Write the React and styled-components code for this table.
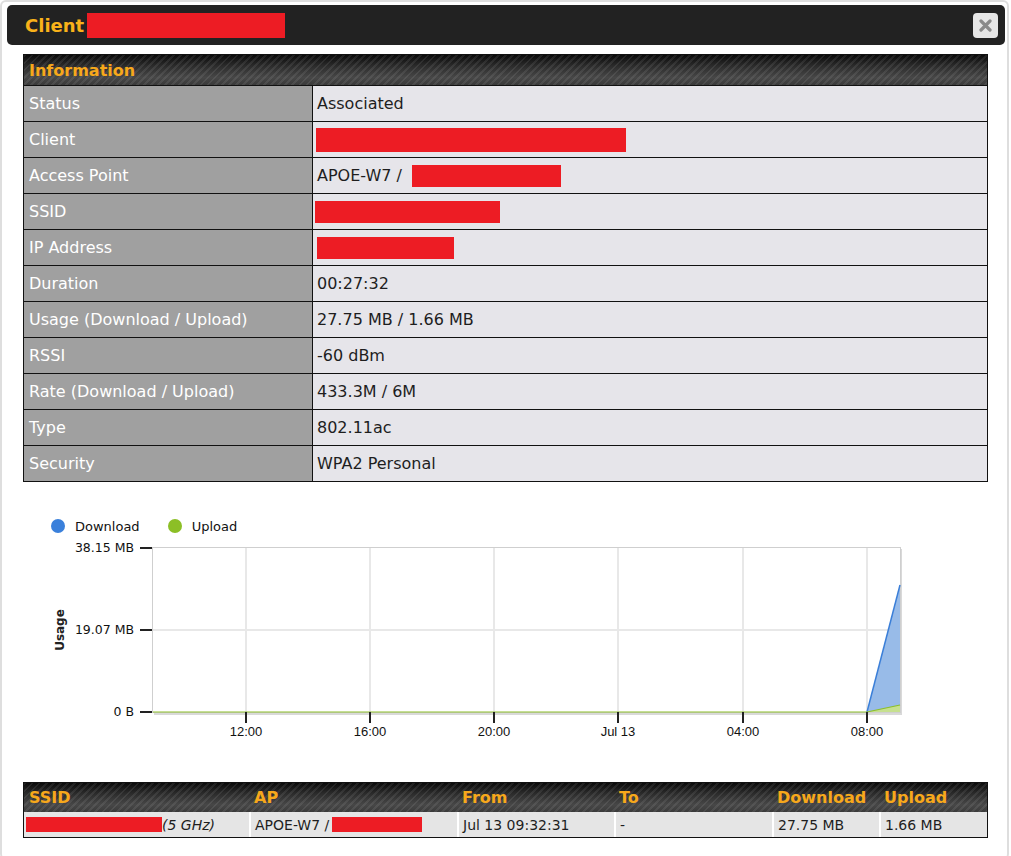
import React from "react";
import styled, { createGlobalStyle, css } from "styled-components";

const Global = createGlobalStyle`
  html, body { margin: 0; padding: 0; background: #fff; }
  body { font-family: "DejaVu Sans", Verdana, sans-serif; }
  * { box-sizing: border-box; }
`;

const stripes = css`
  background-color: #2a2a2a;
  background-image:
    repeating-linear-gradient(135deg, rgba(255,255,255,0.08) 0 2px, rgba(0,0,0,0) 2px 5px),
    linear-gradient(180deg, #0a0a0a 0%, #2a2a2a 35%, #474747 75%, #3a3a3a 100%);
`;

const Dialog = styled.div`
  width: 1009px;
  border: 2px solid #dedede;
  border-radius: 6px;
  padding: 3px 2px 20px 5px;
  background: #fff;
`;

const TitleBar = styled.div`
  height: 40px;
  background: #222;
  border-radius: 5px;
  display: flex;
  align-items: center;
  padding: 0 7px 0 18px;
`;

const Title = styled.div`
  flex: 1;
  display: flex;
  align-items: center;
  gap: 3px;
  color: #f9b21a;
  font-weight: bold;
  font-size: 18px;
`;

const CloseButton = styled.button`
  width: 25px;
  height: 25px;
  border: none;
  border-radius: 4px;
  background: #e6e6e6;
  padding: 0;
  display: flex;
  align-items: center;
  justify-content: center;
  cursor: pointer;
`;

const Body = styled.div`
  padding: 9px 17px 0 16px;
`;

const Redact = styled.span`
  display: inline-block;
  background: #ed1c24;
  width: ${(p) => p.$w}px;
  height: ${(p) => p.$h}px;
  margin-left: ${(p) => p.$ml || 0}px;
`;

const InfoTable = styled.div`
  border: 1px solid #111;
`;

const TableHead = styled.div`
  height: 30px;
  display: flex;
  align-items: center;
  padding-left: 5px;
  color: #f7a81b;
  font-weight: bold;
  font-size: 16px;
  ${stripes};
`;

const InfoRow = styled.div`
  display: grid;
  grid-template-columns: 289px 1fr;
  height: 36px;
  border-top: 1px solid #111;
  font-size: 16px;
`;

const Label = styled.div`
  background: #a0a0a0;
  color: #fff;
  border-right: 1px solid #111;
  padding-left: 5px;
  display: flex;
  align-items: center;
`;

const Value = styled.div`
  background: #e6e5ea;
  color: #1e1e1e;
  padding-left: 4px;
  display: flex;
  align-items: center;
`;

const ChartSection = styled.div`
  padding-top: 37px;
`;

const Legend = styled.div`
  display: flex;
  align-items: center;
  gap: 28px;
  padding-left: 28px;
  height: 14px;
  font-size: 13px;
  color: #111;
`;

const LegendItem = styled.div`
  display: flex;
  align-items: center;
  gap: 10px;
`;

const Dot = styled.span`
  width: 14px;
  height: 14px;
  border-radius: 50%;
  background: ${(p) => p.$color};
`;

const ChartSvg = styled.svg`
  display: block;
  margin-top: 3px;
`;

const BottomTable = styled.div`
  margin-top: 6px;
  border: 1px solid #111;
`;

const cols = "225px 208px 157px 158px 107px 1fr";

const BottomHead = styled.div`
  display: grid;
  grid-template-columns: ${cols};
  height: 29px;
  align-items: center;
  color: #f7a81b;
  font-weight: bold;
  font-size: 16px;
  ${stripes};
`;

const HeadCell = styled.div`
  padding-left: 5px;
  white-space: nowrap;
`;

const BottomRow = styled.div`
  display: grid;
  grid-template-columns: ${cols};
  height: 25px;
  background: #e5e5e5;
  font-size: 14px;
  color: #1e1e1e;
`;

const Cell = styled.div`
  display: flex;
  align-items: center;
  padding-left: ${(p) => (p.$first ? 2 : 4)}px;
  border-left: ${(p) => (p.$first ? "none" : "2px solid #fff")};
  white-space: nowrap;
`;

const Italic = styled.span`
  font-style: italic;
`;

const rows = [
  ["Status", "Associated"],
  ["Client", <Redact key="c" $w={310} $h={24} $ml={-1} />],
  ["Access Point", <>APOE-W7 /<Redact $w={149} $h={22} $ml={10} /></>],
  ["SSID", <Redact key="s" $w={185} $h={22} $ml={-2} />],
  ["IP Address", <Redact key="i" $w={137} $h={22} />],
  ["Duration", "00:27:32"],
  ["Usage (Download / Upload)", "27.75 MB / 1.66 MB"],
  ["RSSI", "-60 dBm"],
  ["Rate (Download / Upload)", "433.3M / 6M"],
  ["Type", "802.11ac"],
  ["Security", "WPA2 Personal"],
];

const xTicks = [
  [223, "12:00"],
  [347, "16:00"],
  [471, "20:00"],
  [595, "Jul 13"],
  [720, "04:00"],
  [844, "08:00"],
];

const yTicks = [
  [12, "38.15 MB"],
  [94, "19.07 MB"],
  [176, "0 B"],
];

function Chart() {
  return (
    <ChartSvg width="965" height="240" viewBox="0 0 965 240">
      <rect x="131" y="13" width="748" height="166" fill="#d9d9d9" />
      <rect x="129.5" y="11.5" width="748" height="165" fill="#fff" stroke="#cfcfcf" />
      {xTicks.map(([x]) => (
        <line key={x} x1={x} x2={x} y1="12" y2="176" stroke="#e8e8e8" strokeWidth="2" />
      ))}
      <line x1="130" x2="877" y1="94" y2="94" stroke="#e8e8e8" strokeWidth="2" />
      <polygon points="844,176 877,49 877,176" fill="#98bbe8" />
      <line x1="844" y1="176" x2="877" y2="49" stroke="#3b7fd8" strokeWidth="1.5" />
      <polygon points="844,176 877,169 877,176" fill="#c6e08f" />
      <line x1="130" y1="176" x2="844" y2="176" stroke="#8dbf2a" strokeWidth="1.2" />
      <line x1="844" y1="176" x2="877" y2="169" stroke="#8dbf2a" strokeWidth="1.2" />
      {yTicks.map(([y, t]) => (
        <g key={t}>
          <line x1="117" x2="129" y1={y} y2={y} stroke="#222" strokeWidth="2" />
          <text x="111" y={y + 4} textAnchor="end" fontSize="12.5" fill="#111" fontFamily="DejaVu Sans, sans-serif">
            {t}
          </text>
        </g>
      ))}
      {xTicks.map(([x, t]) => (
        <g key={t}>
          <line x1={x} x2={x} y1="176" y2="187" stroke="#222" strokeWidth="2" />
          <text x={x} y="200" textAnchor="middle" fontSize="13" fill="#111" fontFamily="Liberation Sans, Arial, sans-serif">
            {t}
          </text>
        </g>
      ))}
      <text
        x="0"
        y="0"
        transform="translate(41 94) rotate(-90)"
        textAnchor="middle"
        fontSize="12"
        fontWeight="bold"
        fill="#222"
        fontFamily="DejaVu Sans, sans-serif"
      >
        Usage
      </text>
    </ChartSvg>
  );
}

export default function App() {
  return (
    <>
      <Global />
      <Dialog>
        <TitleBar>
          <Title>
            Client <Redact $w={198} $h={25} />
          </Title>
          <CloseButton aria-label="close">
            <svg width="13" height="13" viewBox="0 0 13 13">
              <path d="M2 2 L11 11 M11 2 L2 11" stroke="#8a8a8a" strokeWidth="3.2" strokeLinecap="round" />
            </svg>
          </CloseButton>
        </TitleBar>
        <Body>
          <InfoTable>
            <TableHead>Information</TableHead>
            {rows.map(([l, v]) => (
              <InfoRow key={l}>
                <Label>{l}</Label>
                <Value>{v}</Value>
              </InfoRow>
            ))}
          </InfoTable>
          <ChartSection>
            <Legend>
              <LegendItem>
                <Dot $color="#3a80db" />
                Download
              </LegendItem>
              <LegendItem>
                <Dot $color="#8cbf26" />
                Upload
              </LegendItem>
            </Legend>
            <Chart />
          </ChartSection>
          <BottomTable>
            <BottomHead>
              <HeadCell>SSID</HeadCell>
              <HeadCell>AP</HeadCell>
              <HeadCell>From</HeadCell>
              <HeadCell>To</HeadCell>
              <HeadCell>Download</HeadCell>
              <HeadCell>Upload</HeadCell>
            </BottomHead>
            <BottomRow>
              <Cell $first>
                <Redact $w={136} $h={15} />
                <Italic>(5 GHz)</Italic>
              </Cell>
              <Cell>
                APOE-W7 /<Redact $w={90} $h={15} $ml={3} />
              </Cell>
              <Cell>Jul 13 09:32:31</Cell>
              <Cell>-</Cell>
              <Cell>27.75 MB</Cell>
              <Cell>1.66 MB</Cell>
            </BottomRow>
          </BottomTable>
        </Body>
      </Dialog>
    </>
  );
}
